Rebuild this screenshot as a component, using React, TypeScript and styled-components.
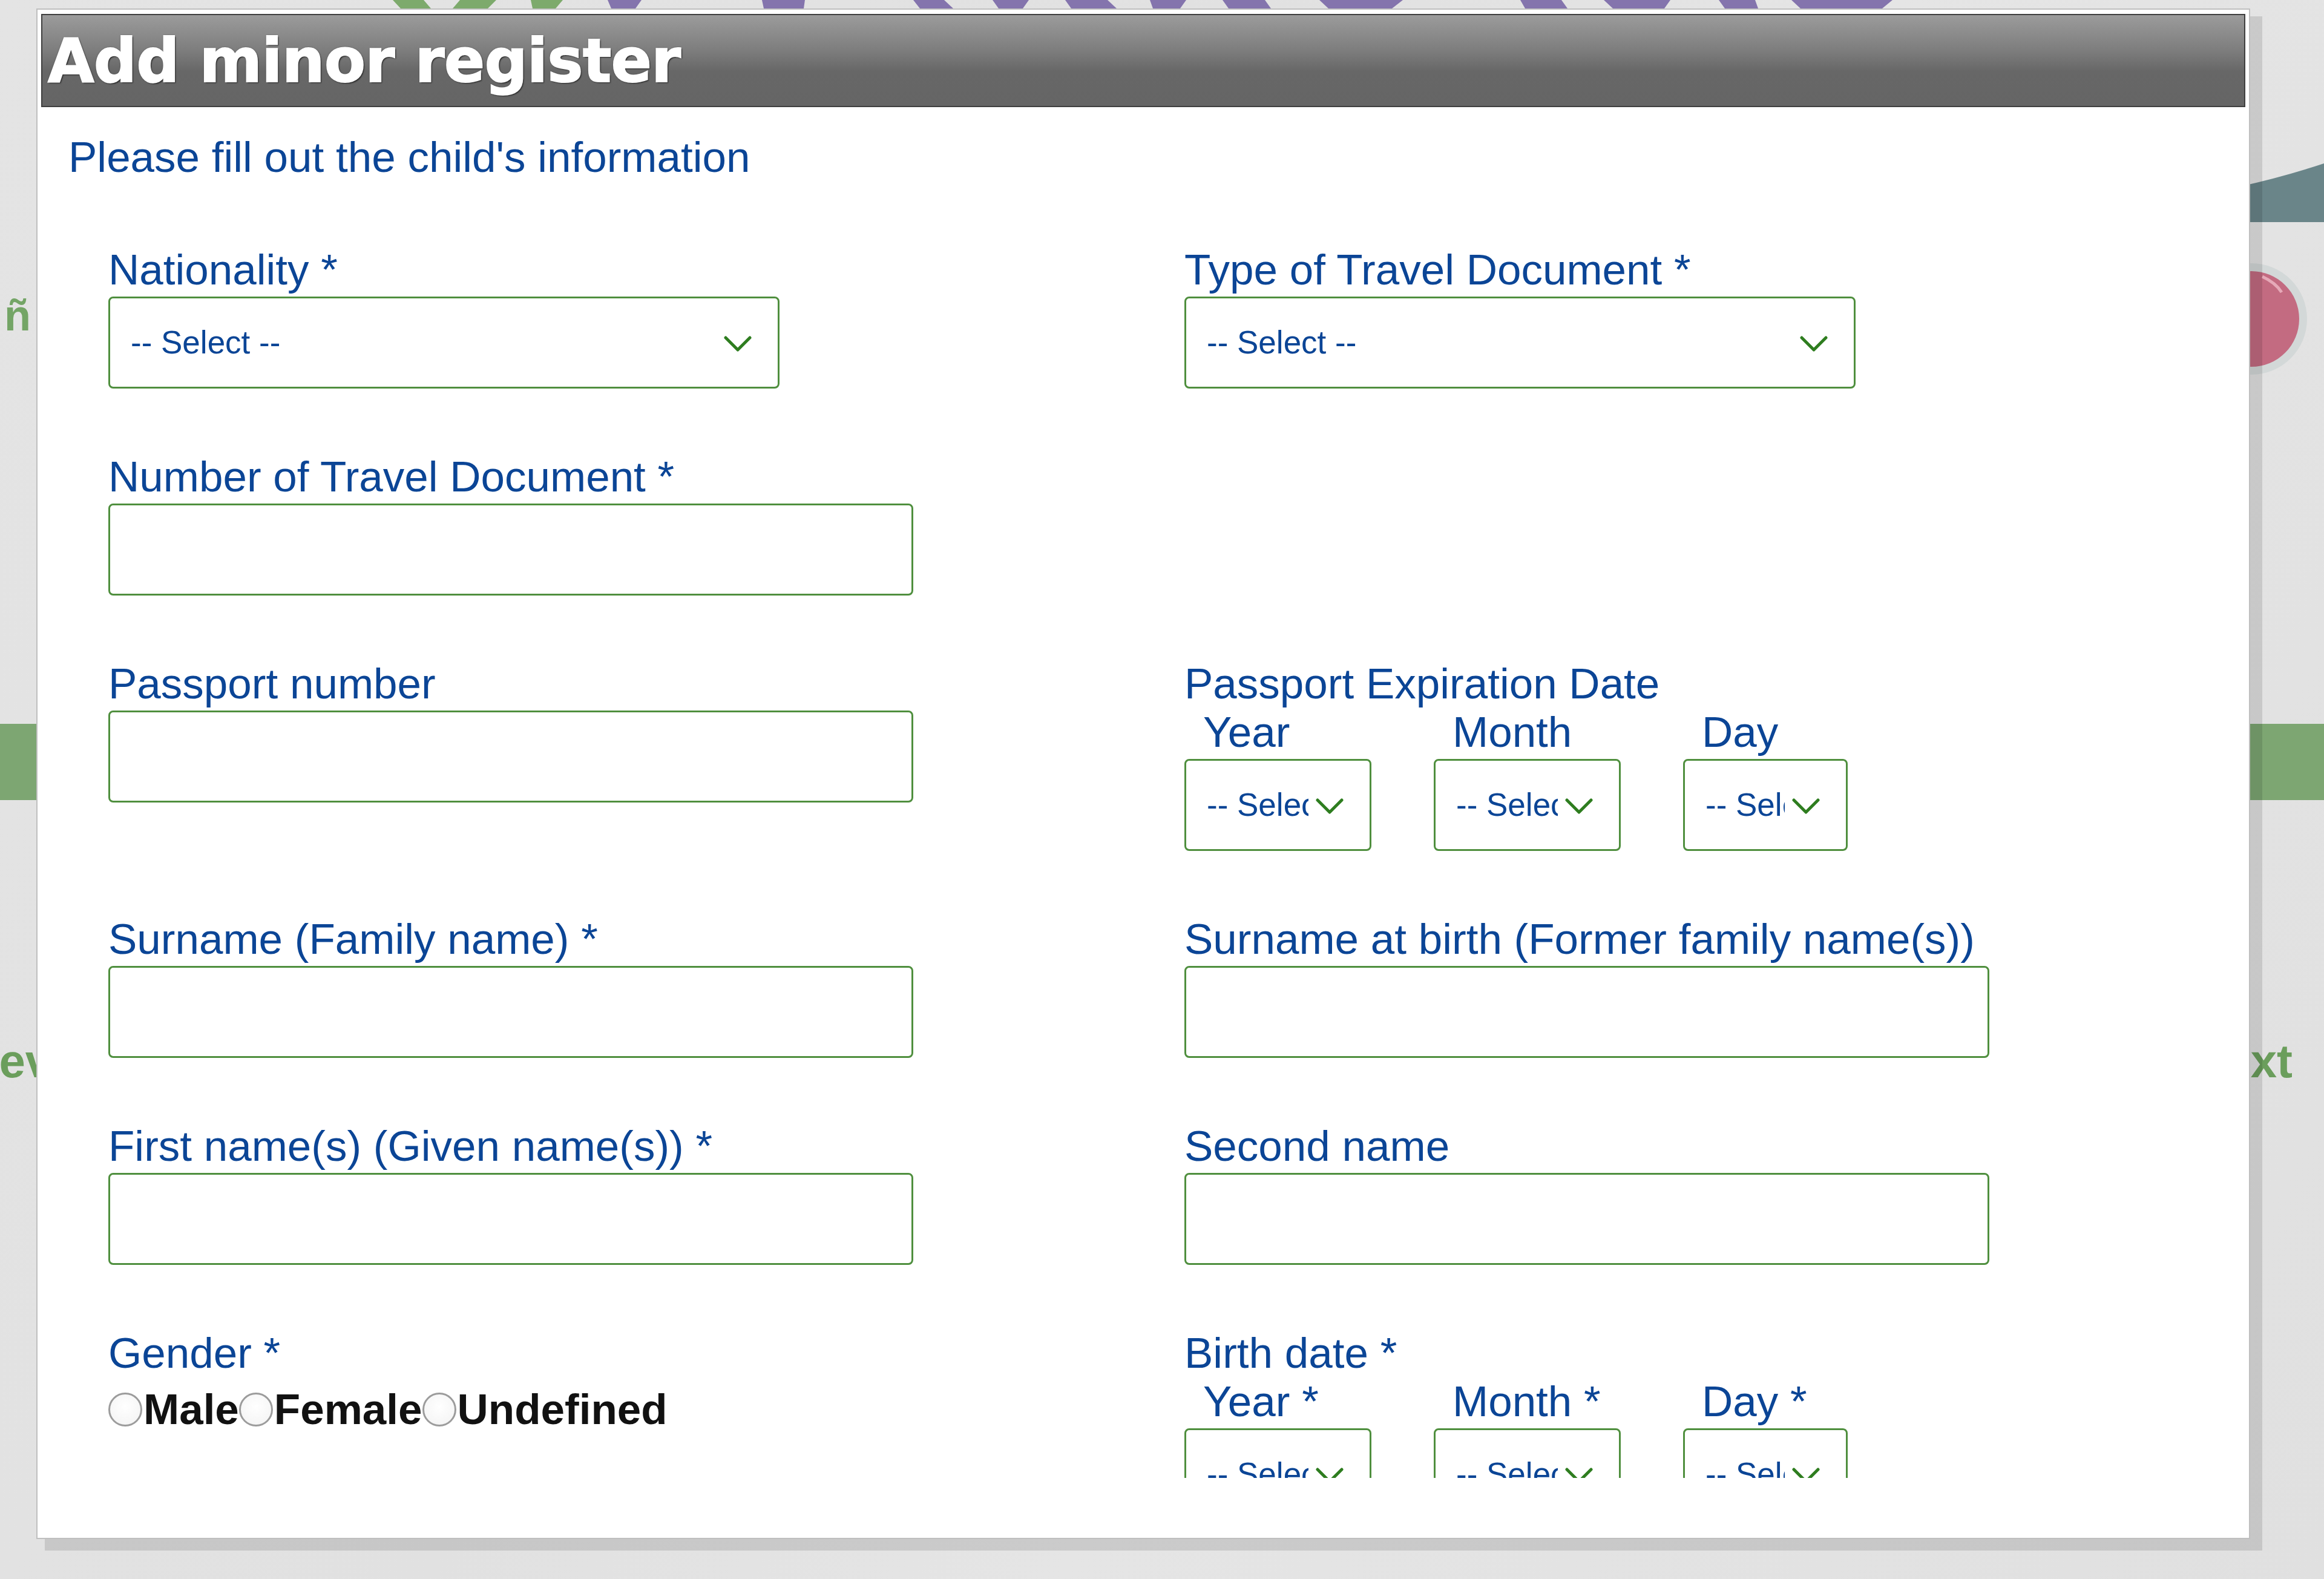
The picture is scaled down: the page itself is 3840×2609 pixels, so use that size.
import React from "react";
import styled, { createGlobalStyle } from "styled-components";

const BLUE = "#0b4596";
const GREEN_BORDER = "#4f8f3e";
const CHEVRON = "#2e7d1f";

const GlobalStyle = createGlobalStyle`
  html, body { margin: 0; padding: 0; }
  body {
    background: #e3e3e3;
    font-family: "Liberation Sans", Arial, sans-serif;
  }
  * { box-sizing: border-box; }
`;

const Page = styled.div`
  position: relative;
  width: 3840px;
  height: 2609px;
  overflow: hidden;
  background: linear-gradient(118deg, #e4e4e4 0%, #e1e1e1 40%, #e5e5e5 60%, #e0e0e0 100%);
`;

/* ---------- background page (mostly hidden by the modal) ---------- */
const Backdrop = styled.div`
  display: flex;
  flex-direction: column;
  width: 100%;
`;

const LogoStrip = styled.svg`
  display: block;
  width: 3840px;
  height: 14px;
`;

const Strip = styled.div<{ $top: number; $h: number }>`
  display: flex;
  align-items: center;
  justify-content: space-between;
  margin-top: ${(p) => p.$top}px;
  height: ${(p) => p.$h}px;
`;

const GreenBand = styled.div`
  margin-top: 569px;
  height: 126px;
  background: #7da672;
`;

const PageLink = styled.span<{ $side: "left" | "right" }>`
  font-family: "Liberation Sans", Arial, sans-serif;
  font-weight: 700;
  font-size: 78px;
  line-height: 80px;
  color: #6b9e5c;
  ${(p) => (p.$side === "left" ? "margin-left: -84px;" : "margin-right: 52px;")}
`;

const LangGlyph = styled.span`
  font-family: "Liberation Sans", Arial, sans-serif;
  font-size: 72px;
  font-weight: 700;
  line-height: 80px;
  color: #74a566;
  margin-left: 7px;
  margin-top: -12px;
`;

/* ---------- modal ---------- */
const Modal = styled.section`
  position: absolute;
  left: 60px;
  top: 14px;
  width: 3658px;
  height: 2529px;
  background: #ffffff;
  border: 2px solid #bfbfbf;
  padding: 7px 6px;
  box-shadow: 17px 16px 0 3px rgba(0, 0, 0, 0.115);
  display: flex;
  flex-direction: column;
  z-index: 2;
`;

const Header = styled.header`
  height: 154px;
  flex: none;
  display: flex;
  align-items: center;
  padding-left: 9px;
  border: 2px solid #3f3f3f;
  background: linear-gradient(to bottom, #9b9b9b 0%, #7e7e7e 38%, #676767 62%, #656565 100%);
`;

const Title = styled.h1`
  margin: 0;
  font-family: "DejaVu Sans", Lato, sans-serif;
  font-weight: 700;
  font-size: 99px;
  line-height: 1;
  color: #ffffff;
  letter-spacing: -0.5px;
  -webkit-text-stroke: 2px #ffffff;
  text-shadow: 0 0 3px #2a2a2a, 2px 2px 2px #2a2a2a;
`;

const Body = styled.div`
  flex: 1;
  display: flex;
  flex-direction: column;
  padding: 43px 0 0 45px;
`;

const Intro = styled.p`
  margin: 0;
  font-size: 71px;
  line-height: 80px;
  color: ${BLUE};
`;

const ScrollArea = styled.div`
  height: 2142px;
  overflow: hidden;
  padding: 106px 0 0 66px;
`;

const FieldGrid = styled.div`
  display: grid;
  grid-template-columns: 1778px 1fr;
  row-gap: 106px;
  align-items: start;
`;

const Field = styled.div`
  display: flex;
  flex-direction: column;
  align-items: flex-start;
`;

const Label = styled.label`
  display: block;
  font-size: 71px;
  line-height: 80px;
  color: ${BLUE};
  white-space: nowrap;
`;

const SubLabel = styled(Label)`
  padding-left: 31px;
`;

const TextInput = styled.input`
  display: block;
  margin-top: 4px;
  width: 1330px;
  height: 152px;
  border: 3px solid ${GREEN_BORDER};
  border-radius: 8px;
  background: #fff;
  font-family: inherit;
  font-size: 53px;
  padding: 0 34px;
  outline: none;
`;

const SelectBox = styled.div<{ $w: number }>`
  display: flex;
  align-items: center;
  gap: 12px;
  margin-top: 4px;
  width: ${(p) => p.$w}px;
  height: 152px;
  border: 3px solid ${GREEN_BORDER};
  border-radius: 8px;
  background: #fff;
  padding: 0 43px 0 34px;
`;

const SelectText = styled.span`
  flex: 1;
  min-width: 0;
  overflow: hidden;
  white-space: nowrap;
  font-size: 53px;
  line-height: 60px;
  color: ${BLUE};
`;

const ChevronSvg = styled.svg`
  flex: none;
  width: 46px;
  height: 28px;
  margin-top: 4px;
`;

const DateRow = styled.div`
  display: flex;
  gap: 103px;
`;

const DatePart = styled.div`
  display: flex;
  flex-direction: column;
`;

const RadioRow = styled.div`
  display: flex;
  align-items: center;
  margin-top: 13px;
  height: 80px;
`;

const RadioOption = styled.label`
  display: flex;
  align-items: center;
`;

const RadioCircle = styled.span`
  flex: none;
  width: 56px;
  height: 56px;
  border-radius: 50%;
  border: 3px solid #9c9c9c;
  background: radial-gradient(circle at 50% 40%, #ffffff 0%, #f6f6f6 70%, #eeeeee 100%);
  margin-right: 2px;
`;

const RadioText = styled.span`
  font-weight: 700;
  font-size: 71px;
  line-height: 80px;
  color: #111;
`;

const Chevron = () => (
  <ChevronSvg viewBox="0 0 46 28" aria-hidden>
    <polyline
      points="3,4 23,24 43,4"
      fill="none"
      stroke={CHEVRON}
      strokeWidth="5"
      strokeLinecap="round"
      strokeLinejoin="round"
    />
  </ChevronSvg>
);

const Select = ({ w }: { w: number }) => (
  <SelectBox $w={w}>
    <SelectText>-- Select --</SelectText>
    <Chevron />
  </SelectBox>
);

const DateField = ({ label, required }: { label: string; required: boolean }) => {
  const star = required ? " *" : "";
  const parts: { name: string; w: number }[] = [
    { name: "Year", w: 309 },
    { name: "Month", w: 309 },
    { name: "Day", w: 272 },
  ];
  return (
    <Field>
      <Label>{label}</Label>
      <DateRow>
        {parts.map((p) => (
          <DatePart key={p.name}>
            <SubLabel>
              {p.name}
              {star}
            </SubLabel>
            <Select w={p.w} />
          </DatePart>
        ))}
      </DateRow>
    </Field>
  );
};

const InputField = ({ label }: { label: string }) => (
  <Field>
    <Label>{label}</Label>
    <TextInput type="text" />
  </Field>
);

const SelectField = ({ label }: { label: string }) => (
  <Field>
    <Label>{label}</Label>
    <Select w={1109} />
  </Field>
);

const Logo = () => (
  <LogoStrip viewBox="0 0 3840 14" aria-hidden>
    <g fill="#7daa6c">
      <polygon points="649,0 700,0 712,14 662,14" />
      <polygon points="760,0 820,0 806,14 748,14" />
      <polygon points="877,0 930,0 918,14 880,14" />
    </g>
    <g fill="#8474ad">
      <polygon points="1004,0 1060,0 1050,14 1010,14" />
      <polygon points="1259,0 1330,0 1328,14 1262,14" />
      <polygon points="1509,0 1560,0 1575,14 1520,14" />
      <polygon points="1640,0 1700,0 1690,14 1650,14" />
      <polygon points="1760,0 1830,0 1845,14 1770,14" />
      <polygon points="1900,0 1960,0 1950,14 1905,14" />
      <polygon points="2020,0 2090,0 2100,14 2030,14" />
      <polygon points="2180,0 2318,0 2300,14 2195,14" />
      <polygon points="2512,0 2580,0 2590,14 2520,14" />
      <polygon points="2650,0 2760,0 2750,14 2665,14" />
      <polygon points="2840,0 2900,0 2905,14 2850,14" />
      <polygon points="2960,0 3127,0 3110,14 2975,14" />
    </g>
  </LogoStrip>
);

export default function App() {
  return (
    <>
      <GlobalStyle />
      <Page>
        <Backdrop aria-hidden>
          <Logo />
          <Strip $top={256} $h={110}>
            <span />
            <svg width="260" height="110" viewBox="0 0 260 110">
              <path d="M0 60 Q140 40 260 0 L260 97 L0 97 Z" fill="#6a8589" />
            </svg>
          </Strip>
          <Strip $top={47} $h={200}>
            <LangGlyph>ñ</LangGlyph>
            <svg width="200" height="200" viewBox="0 0 200 200" style={{ marginRight: 20 }}>
              <circle cx="100" cy="100" r="92" fill="#d3d8d8" />
              <circle cx="100" cy="100" r="79" fill="#c36b81" />
              <path d="M118 30 Q140 40 150 56" stroke="#e6a9b8" strokeWidth="5" fill="none" />
            </svg>
          </Strip>
          <GreenBand />
          <Strip $top={391} $h={80}>
            <PageLink $side="left">Previous</PageLink>
            <PageLink $side="right">Next</PageLink>
          </Strip>
        </Backdrop>

        <Modal>
          <Header>
            <Title>Add minor register</Title>
          </Header>
          <Body>
            <Intro>Please fill out the child's information</Intro>
            <ScrollArea>
              <FieldGrid>
                <SelectField label="Nationality *" />
                <SelectField label="Type of Travel Document *" />

                <InputField label="Number of Travel Document *" />
                <div />

                <InputField label="Passport number" />
                <DateField label="Passport Expiration Date" required={false} />

                <InputField label="Surname (Family name) *" />
                <InputField label="Surname at birth (Former family name(s))" />

                <InputField label="First name(s) (Given name(s)) *" />
                <InputField label="Second name" />

                <Field>
                  <Label>Gender *</Label>
                  <RadioRow>
                    {["Male", "Female", "Undefined"].map((g) => (
                      <RadioOption key={g}>
                        <RadioCircle />
                        <RadioText>{g}</RadioText>
                      </RadioOption>
                    ))}
                  </RadioRow>
                </Field>
                <DateField label="Birth date *" required={true} />
              </FieldGrid>
            </ScrollArea>
          </Body>
        </Modal>
      </Page>
    </>
  );
}
